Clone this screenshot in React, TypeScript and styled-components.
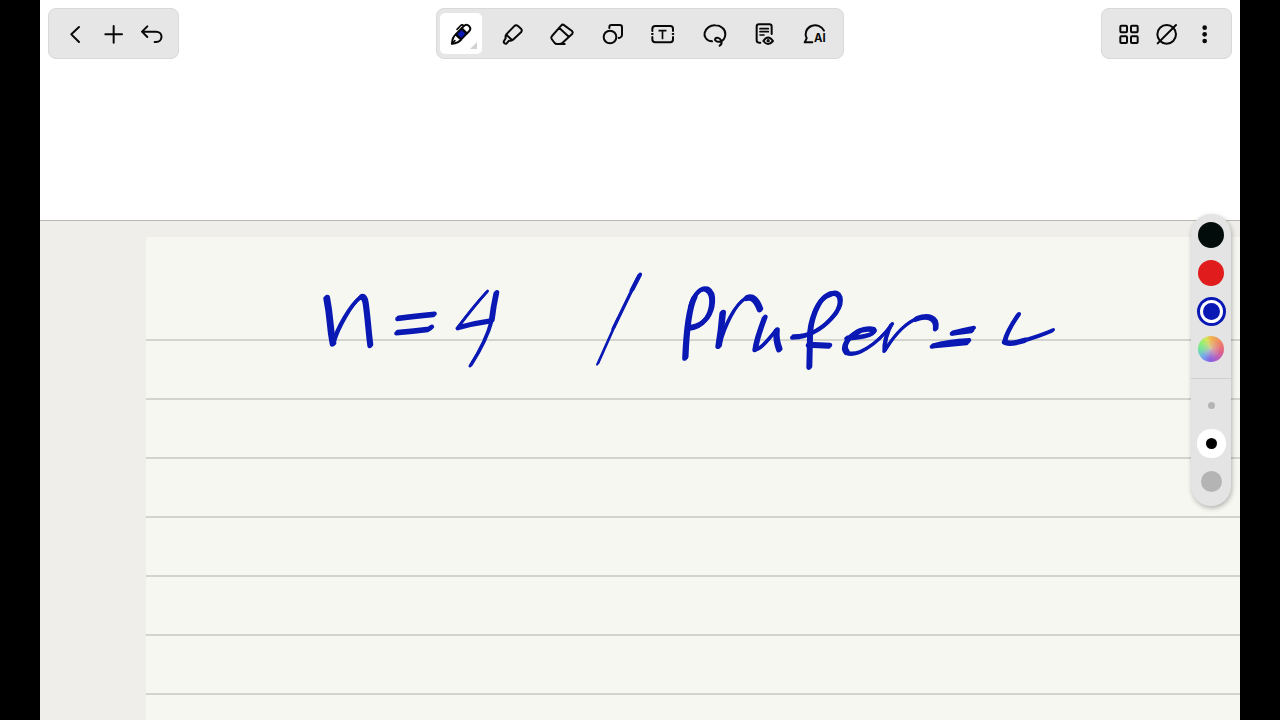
import React from "react";
import styled, { createGlobalStyle, css } from "styled-components";

const INK = "#0a18b4";

const GlobalStyle = createGlobalStyle`
  * { box-sizing: border-box; }
  body {
    margin: 0;
    background: #000;
    font-family: Inter, "Liberation Sans", sans-serif;
  }
`;

const Screen = styled.div`
  position: relative;
  display: flex;
  flex-direction: column;
  height: 100vh;
  margin: 0 40px;
  overflow: hidden;
  background: #fff;
`;

const Header = styled.header`
  display: grid;
  grid-template-columns: 1fr auto 1fr;
  align-items: start;
  flex: 0 0 220px;
  padding: 8px;
`;

const Toolbar = styled.div<{ $align?: "start" | "end"; $wide?: boolean }>`
  display: flex;
  align-items: center;
  justify-content: space-between;
  justify-self: ${({ $align }) => $align ?? "center"};
  width: ${({ $wide }) => ($wide ? "408px" : "131px")};
  height: 51px;
  padding: ${({ $wide }) => ($wide ? "0 7px 0 3px" : "0 8px 0 7px")};
  border: 1px solid #d9d9d9;
  border-radius: 8px;
  background: #e6e6e6;
`;

const ToolButton = styled.button<{ $wide?: boolean; $active?: boolean }>`
  position: relative;
  display: flex;
  align-items: center;
  justify-content: center;
  width: ${({ $wide }) => ($wide ? "42px" : "38px")};
  height: 41px;
  padding: 0;
  border: 0;
  border-radius: 5px;
  background: ${({ $active }) => ($active ? "#fff" : "transparent")};
  cursor: pointer;
`;

const MoreCorner = styled.span`
  position: absolute;
  right: 5px;
  bottom: 5px;
  width: 7px;
  height: 7px;
  background: #d2d2d2;
  clip-path: polygon(100% 0, 100% 100%, 0 100%);
`;

const Glyph = styled.svg`
  display: block;
  width: 30px;
  height: 30px;
  fill: none;
  stroke: #080808;
  stroke-width: 6px;
  stroke-linecap: round;
  stroke-linejoin: round;
`;

const Canvas = styled.main`
  flex: 1;
  min-height: 0;
  padding: 16px 0 0 106px;
  border-top: 1px solid #b9b9b1;
  background: #efeeea;
`;

const Paper = styled.section`
  height: 100%;
  padding: 23px 0 0 164px;
  overflow: hidden;
  background: repeating-linear-gradient(
      to bottom,
      #d3d4ce 0 2px,
      #f6f7f1 2px 59px
    )
    0 43px;
  background-color: #f6f7f1;
  box-shadow: inset 0 60px #f6f7f1;
`;

const Ink = styled.svg`
  display: block;
  width: 760px;
  height: 120px;
  overflow: visible;
  fill: none;
  stroke: ${INK};
  stroke-linecap: round;
  stroke-linejoin: round;
`;

const Palette = styled.aside`
  position: absolute;
  top: 214px;
  right: 9px;
  display: flex;
  flex-direction: column;
  width: 40px;
  padding: 2px 0 6px;
  border-radius: 20px;
  background: #e4e4e4;
  box-shadow: 1px 2px 5px rgba(0, 0, 0, 0.28);
`;

const PaletteButton = styled.button`
  display: flex;
  align-items: center;
  justify-content: center;
  height: 38px;
  padding: 0;
  border: 0;
  background: none;
  cursor: pointer;
`;

const Divider = styled.hr`
  width: 100%;
  height: 1px;
  margin: 10px 0 7px;
  border: 0;
  background: #d0d0d0;
`;

const Swatch = styled.span<{ $color: string; $selected?: boolean }>`
  width: 26px;
  height: 26px;
  border-radius: 50%;
  background: ${({ $color }) => $color};
  ${({ $selected, $color }) =>
    $selected &&
    css`
      width: 17px;
      height: 17px;
      box-shadow: 0 0 0 3px #fff, 0 0 0 6px ${$color};
    `}
`;

const Nib = styled.span<{ $size: number; $selected?: boolean }>`
  width: ${({ $size }) => $size}px;
  height: ${({ $size }) => $size}px;
  border-radius: 50%;
  background: ${({ $selected }) => ($selected ? "#000" : "#b4b4b4")};
  box-shadow: ${({ $selected }) => ($selected ? "0 0 0 9px #fff" : "none")};
`;

type Tool = { label: string; box: string; art: React.ReactNode };

const navTools: Tool[] = [
  { label: "Back", box: "60 55 90 90", art: <path d="M117 79 94 101l23 23" /> },
  { label: "Add", box: "174 55 90 90", art: <path d="M221 76v50M196 101h50" /> },
  {
    label: "Undo",
    box: "288 55 90 90",
    art: <path d="M322 77 306 93l16 16M307 93h41c22 0 22 31 0 31h-4" />,
  },
];

const drawTools: Tool[] = [
  {
    label: "Pen",
    box: "48 55 90 90",
    art: (
      <g transform="translate(92 102) rotate(44)">
        <path d="M-11-16v-9q0-11 11-11t11 11v9z" />
        <path d="M-11-15h22V9h-22z" fill={INK} />
        <path d="M-11 10q-2 12 11 28 13-16 11-28z" />
        <path d="M0 37V25" strokeWidth="5" />
        <path d="M-12-26q-7 1-7 7v15" strokeWidth="5" />
      </g>
    ),
  },
  {
    label: "Highlighter",
    box: "200 55 90 90",
    art: (
      <path d="M228 101 251 77c4-4 8-4 12-1l9 8c3 3 3 7 0 11l-24 22c-4 3-7 4-12 3l-7 8c-4 3-11-2-8-7l5-8c-1-5 0-9 2-12zM229 103l16 15" />
    ),
  },
  {
    label: "Eraser",
    box: "351 55 90 90",
    art: (
      <path d="M366 106 394 74q4-4 9 0l23 17q4 4 1 8l-30 28q-3 3-9 3h-7q-4 0-7-3l-9-12q-3-5 1-9zM388 82l26 24M386 130h18" />
    ),
  },
  {
    label: "Shapes",
    box: "113 55 90 90",
    art: (
      <>
        <circle cx="149" cy="109" r="19" />
        <path d="M147 82v-3q0-6 6-6h25q7 0 7 7v23q0 6-6 8l-4 1" />
      </>
    ),
  },
  {
    label: "Text box",
    box: "265 55 90 90",
    art: (
      <>
        <path d="M278 91v-6q0-9 9-9h45q8 0 8 9v6M278 109v7q0 9 9 9h45q8 0 8-9v-7" />
        <path d="M299 90h19M308.500 90v23" strokeLinecap="square" strokeWidth="5" />
        <path d="M277 100h2M339 100h2" />
      </>
    ),
  },
  {
    label: "Lasso",
    box: "27 55 90 90",
    art: (
      <path d="M66 122C49 121 41 107 44 96c4-14 17-23 32-22 17 0 31 12 30 27 0 12-8 21-16 22-10 2-17-4-14-9 4-6 14-2 17 5 3 6 2 12-4 16" />
    ),
  },
  {
    label: "Reader view",
    box: "178 55 90 90",
    art: (
      <>
        <path d="M212 126h-4q-7 0-7-7V78q0-7 7-7h31q7 0 7 7v22" />
        <path d="M211 84h25M211 93h25M211 103h12" strokeWidth="5" />
        <path d="M221 121q14-21 29 0-15 18-29 0z" />
        <circle cx="235.500" cy="120" r="2" fill="#080808" />
      </>
    ),
  },
  {
    label: "AI assistant",
    box: "330 55 90 90",
    art: (
      <>
        <path d="M402 90c-7-14-23-20-38-14-16 7-21 24-14 37l-6 12h23" />
        <text
          x="372"
          y="124"
          fill="#080808"
          stroke="none"
          fontFamily="Inter, sans-serif"
          fontSize="34"
          fontWeight="700"
        >
          AI
        </text>
      </>
    ),
  },
];

const viewTools: Tool[] = [
  {
    label: "Page overview",
    box: "54 55 90 90",
    art: (
      <>
        <rect x="76" y="75" width="20" height="20" rx="3" />
        <rect x="108" y="75" width="20" height="20" rx="3" />
        <rect x="76" y="107" width="20" height="20" rx="3" />
        <rect x="108" y="107" width="20" height="20" rx="3" />
      </>
    ),
  },
  {
    label: "Read only",
    box: "168 55 90 90",
    art: (
      <>
        <circle cx="215" cy="101" r="28" />
        <path d="M188 128 243 73" />
      </>
    ),
  },
  {
    label: "More",
    box: "282 55 90 90",
    art: (
      <g fill="#080808" stroke="none">
        <circle cx="329" cy="81" r="7" />
        <circle cx="329" cy="101" r="7" />
        <circle cx="329" cy="121" r="7" />
      </g>
    ),
  },
];

/* Pen strokes of the note: [path, stroke width], three units to a pixel. */
const strokes: [string, number][] = [
  // n
  ["M50 114Q57 150 60 185T69 250", 16],
  ["M70 249C82 205 124 130 153 111", 11],
  ["M153 111Q164 108 167 130C173 170 176 220 181 256", 14],
  // =
  ["M264 175Q310 169 372 163", 13],
  ["M261 218Q310 214 355 208L364 202", 13],
  // 4
  ["M531 95Q490 140 443 203", 8],
  ["M445 203Q490 190 540 183", 12],
  ["M559 99Q550 140 545 182", 14],
  ["M545 182Q530 240 482 316", 9],
  // slash
  ["M989 45 966 90", 11],
  ["M984 53 910 205", 8],
  ["M925 173 863 312", 6],
  // P
  ["M1126 293C1129 220 1135 150 1153 113", 15],
  ["M1142 140C1152 100 1174 80 1192 89", 12],
  ["M1192 89C1215 102 1208 150 1190 175Q1170 200 1141 203", 14],
  // r
  ["M1238 159Q1234 210 1226 257", 16],
  ["M1228 255C1243 200 1275 130 1310 113", 9],
  ["M1310 114Q1335 105 1350 148", 15],
  // u
  ["M1364 173C1350 210 1338 250 1336 268", 14],
  ["M1336 268C1355 269 1380 230 1399 211", 10],
  ["M1400 211Q1397 240 1408 268", 15],
  // f
  ["M1448 231C1510 231 1554 190 1577 160", 12],
  ["M1577 160C1602 123 1590 91 1563 102", 12],
  ["M1563 102C1520 112 1500 190 1500 230L1498 321", 14],
  ["M1496 254 1558 257", 14],
  // e
  ["M1610 234Q1650 234 1680 224Q1700 215 1690 209", 11],
  ["M1690 209Q1670 203 1640 216", 12],
  ["M1648 214C1610 231 1597 262 1610 276", 14],
  ["M1610 278C1640 292 1700 255 1746 193", 9],
  // r
  ["M1744 194Q1722 235 1724 272", 10],
  ["M1725 271C1750 230 1785 189 1824 174", 9],
  ["M1818 177C1850 165 1882 169 1877 206", 13],
  // =
  ["M1927 219Q1960 211 1990 205", 12],
  ["M1929 220 1986 213", 10],
  ["M1867 258Q1910 246 1976 242", 12],
  ["M1869 258 1972 248", 11],
  // final stroke
  ["M2125 164Q2090 215 2084 245", 12],
  ["M2084 245Q2095 256 2145 241", 13],
  ["M2130 245Q2190 228 2228 211", 10],
];

/* Two passes a little apart give the line its slanted nib. */
const nibPasses = ["translate(-2 2)", "translate(2 -2)"];

const RAINBOW =
  "radial-gradient(circle, #d6c2b0cc 0%, #d6c2b000 55%), conic-gradient(#f0b54e, #ee806a 60deg, #e26284 100deg, #b35ec4 150deg, #8562e4 185deg, #74a8ee 225deg, #70e0a4 265deg, #8df078 300deg, #d5e65b 335deg, #f0b54e)";

const colors = [
  { name: "Black", value: "#020d0b" },
  { name: "Red", value: "#e01c1c" },
  { name: "Blue", value: INK, selected: true },
  { name: "Custom colour", value: RAINBOW },
];

const nibs = [
  { name: "Thin", size: 7 },
  { name: "Medium", size: 11, selected: true },
  { name: "Thick", size: 21 },
];

function Tools({ items, wide }: { items: Tool[]; wide?: boolean }) {
  return (
    <>
      {items.map(({ label, box, art }) => {
        const active = label === "Pen";
        return (
          <ToolButton
            key={label}
            type="button"
            aria-label={label}
            aria-pressed={wide ? active : undefined}
            $wide={wide}
            $active={active}
          >
            <Glyph viewBox={box} aria-hidden="true">
              {art}
            </Glyph>
            {active && <MoreCorner />}
          </ToolButton>
        );
      })}
    </>
  );
}

export default function App() {
  return (
    <>
      <GlobalStyle />
      <Screen>
        <Header>
          <Toolbar $align="start">
            <Tools items={navTools} />
          </Toolbar>
          <Toolbar $wide>
            <Tools items={drawTools} wide />
          </Toolbar>
          <Toolbar $align="end">
            <Tools items={viewTools} />
          </Toolbar>
        </Header>
        <Canvas>
          <Paper>
            <Ink viewBox="0 0 2280 360" role="img" aria-label="Handwritten note">
              {nibPasses.map((shift) => (
                <g key={shift} transform={shift}>
                  {strokes.map(([d, width]) => (
                    <path key={d} d={d} strokeWidth={width} />
                  ))}
                </g>
              ))}
            </Ink>
          </Paper>
        </Canvas>
        <Palette aria-label="Pen settings">
          {colors.map(({ name, value, selected }) => (
            <PaletteButton key={name} type="button" aria-label={name} aria-pressed={!!selected}>
              <Swatch $color={value} $selected={selected} />
            </PaletteButton>
          ))}
          <Divider />
          {nibs.map(({ name, size, selected }) => (
            <PaletteButton key={name} type="button" aria-label={name} aria-pressed={!!selected}>
              <Nib $size={size} $selected={selected} />
            </PaletteButton>
          ))}
        </Palette>
      </Screen>
    </>
  );
}
